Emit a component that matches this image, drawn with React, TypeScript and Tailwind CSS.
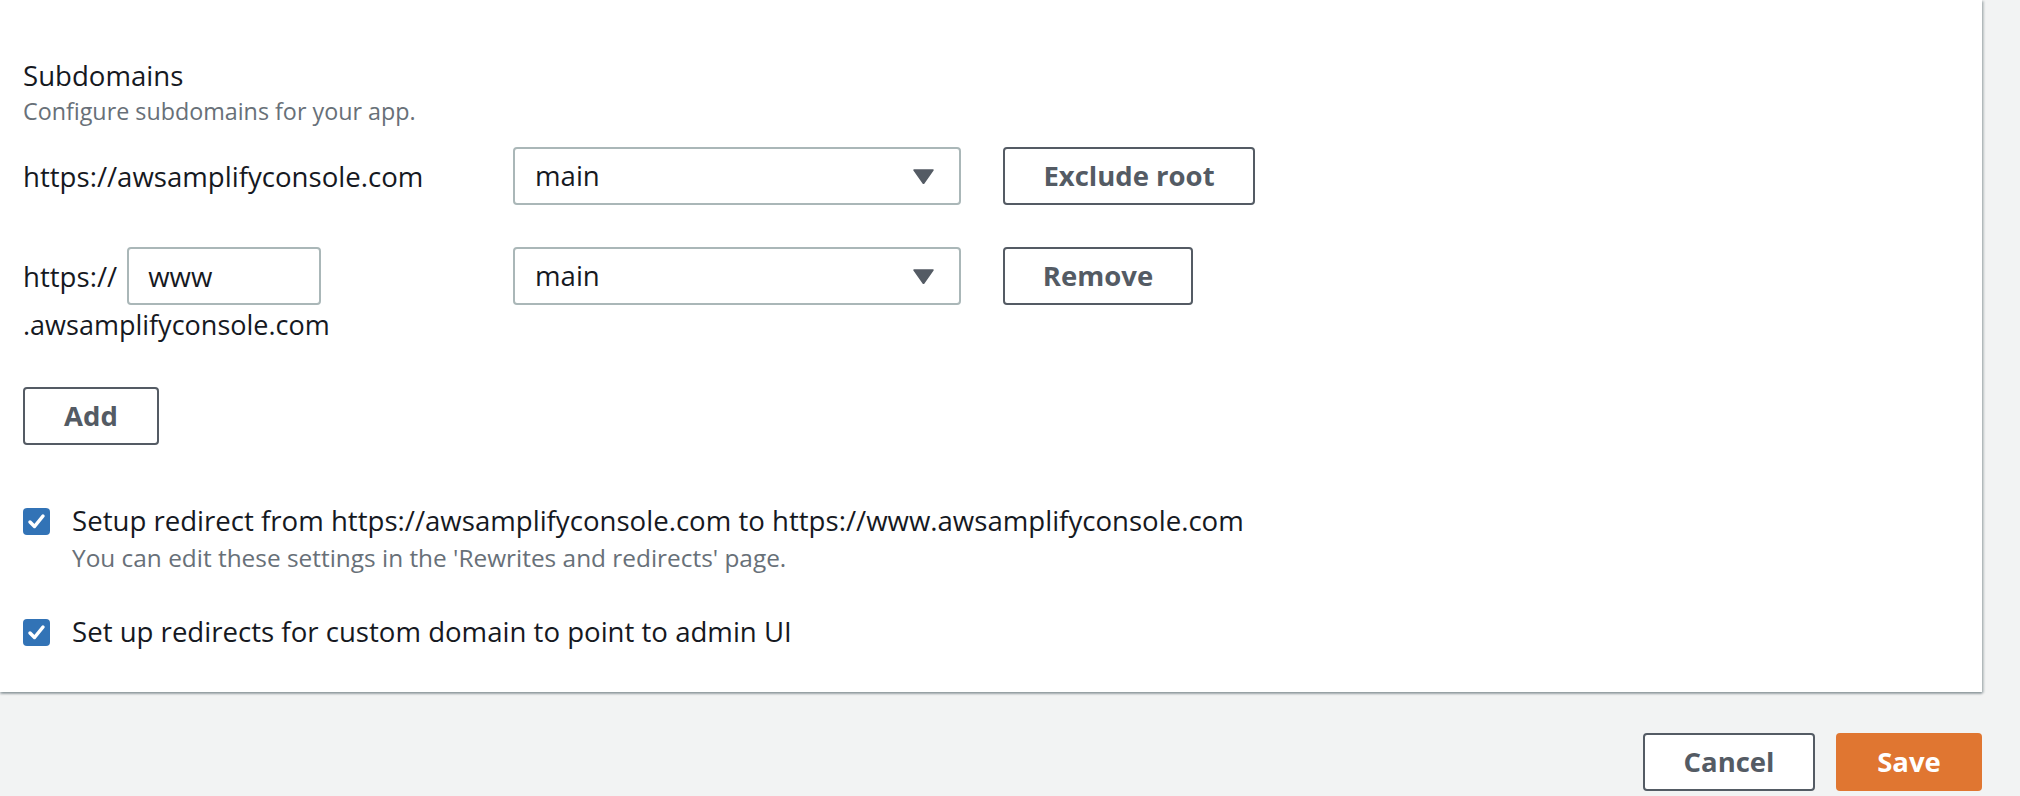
import React from "react";

const Caret = () => (
  <svg width="21" height="15" viewBox="0 0 21 15" className="shrink-0">
    <path d="M1 1h19L10.5 14.5z" fill="#545b64" stroke="#545b64" strokeWidth="1.5" strokeLinejoin="round" />
  </svg>
);

const Select = ({ value }: { value: string }) => (
  <div className="flex h-[58px] w-[448px] shrink-0 items-center justify-between rounded-[4px] border-2 border-[#aab7b8] bg-white pl-[20px] pr-[25px] text-[27.6px] text-[#16191f]">
    <span>{value}</span>
    <Caret />
  </div>
);

const Checkbox = () => (
  <div className="mt-[6px] flex h-[27px] w-[27px] shrink-0 items-center justify-center rounded-[4px] bg-[#3273b6]">
    <svg width="27" height="27" viewBox="0 0 27 27">
      <path d="M7 14l4.5 4.5L20 8" fill="none" stroke="#fff" strokeWidth="3.5" strokeLinecap="round" strokeLinejoin="round" />
    </svg>
  </div>
);

const btn =
  "flex h-[58px] shrink-0 items-center justify-center rounded-[4px] border-2 border-[#545b64] bg-white text-[27.5px] font-bold text-[#545b64]";

export default function App() {
  return (
    <div className="min-h-screen bg-[#f2f3f3] pr-[38px] font-['Open_Sans',sans-serif] text-[#16191f]">
      <section className="bg-white pb-[43px] pl-[23px] pt-[57px] shadow-[0_2px_2px_0_rgba(0,28,36,0.3),2px_1px_2px_0_rgba(0,28,36,0.2)]">
        <h2 className="text-[27.6px] leading-[36px]">Subdomains</h2>
        <p className="mt-[2px] text-[23.3px] leading-[32px] text-[#687078]">Configure subdomains for your app.</p>

        <div className="mt-[20px] flex flex-col gap-[42px]">
          <div className="flex items-center">
            <div className="w-[490px] shrink-0 text-[27.6px] leading-[36px]">https://awsamplifyconsole.com</div>
            <Select value="main" />
            <button className={`${btn} ml-[42px] w-[252px]`}>Exclude root</button>
          </div>

          <div className="flex items-start">
            <div className="w-[490px] shrink-0 text-[27.6px] leading-[36px]">
              <div className="flex items-center">
                <span>https://</span>
                <input
                  defaultValue="www"
                  className="ml-[10px] h-[58px] w-[194px] rounded-[4px] border-2 border-[#aab7b8] bg-white pl-[19px] text-[27.6px] text-[#16191f] outline-none"
                />
              </div>
              <div className="mt-[2px] text-[27px]">.awsamplifyconsole.com</div>
            </div>
            <Select value="main" />
            <button className={`${btn} ml-[42px] w-[190px]`}>Remove</button>
          </div>
        </div>

        <button className={`${btn} mt-[44px] w-[136px]`}>Add</button>

        <div className="mt-[57px] flex items-start gap-[22px]">
          <Checkbox />
          <div>
            <div className="text-[27.6px] leading-[36px]">
              Setup redirect from https://awsamplifyconsole.com to https://www.awsamplifyconsole.com
            </div>
            <div className="mt-[4px] text-[24.4px] leading-[32px] text-[#687078]">
              You can edit these settings in the 'Rewrites and redirects' page.
            </div>
          </div>
        </div>

        <div className="mt-[39px] flex items-start gap-[22px]">
          <Checkbox />
          <div className="text-[27.6px] leading-[36px]">Set up redirects for custom domain to point to admin UI</div>
        </div>
      </section>

      <div className="flex justify-end gap-[21px] pt-[41px]">
        <button className={`${btn} w-[172px]`}>Cancel</button>
        <button className="flex h-[58px] w-[146px] items-center justify-center rounded-[4px] bg-[#e07631] text-[27.5px] font-bold text-white">
          Save
        </button>
      </div>
    </div>
  );
}
